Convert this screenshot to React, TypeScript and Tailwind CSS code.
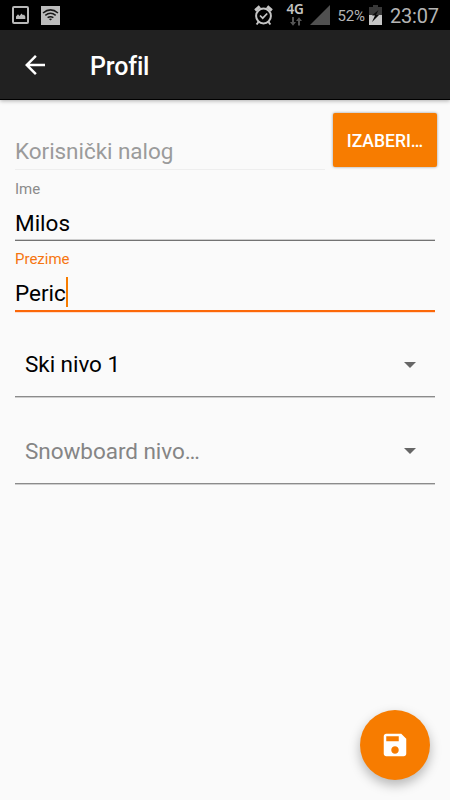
import React from "react";

function StatusBar() {
  return (
    <div className="flex h-[30px] bg-black text-[#b4b4b4]">
      <svg className="ml-3 mt-1.5 shrink-0" width="17" height="18" viewBox="0 0 17 18">
        <rect x="1" y="1" width="15" height="16" rx="1" fill="none" stroke="#b8b8b8" strokeWidth="2" />
        <path d="M4 13V10.500L6 8.300L7.500 10L9.500 7.500L11 9.300L12 8.500L13.300 10.500V13Z" fill="#b8b8b8" />
      </svg>
      <svg className="ml-3 mt-[5px] shrink-0" width="19" height="20" viewBox="0 0 19 20">
        <rect x="0" y="1" width="19" height="19" fill="#bcbcbc" />
        <g fill="none" stroke="#181818" strokeWidth="1.500">
          <path d="M2 8Q9.500 1.800 17 8" />
          <path d="M4.300 10.400Q9.500 6.200 14.700 10.400" />
          <path d="M6.600 12.700Q9.500 10.600 12.400 12.700" />
        </g>
        <path d="M7.900 14Q9.500 13 11.100 14L9.500 15.600Z" fill="#181818" />
      </svg>
      <svg className="ml-[194px] mt-1 shrink-0" width="19" height="22" viewBox="0 0 19 22" fill="none" stroke="#c4c4c4">
        <circle cx="9.500" cy="12" r="7.400" strokeWidth="2" />
        <path d="M1.200 6.500L5.800 2.500M17.800 6.500L13.200 2.500" strokeWidth="3" />
        <path d="M6 11.500L8.700 14.200L13.200 9.500" strokeWidth="1.700" />
        <path d="M4.500 18L2.600 20.500M14.500 18L16.400 20.500" strokeWidth="2" />
      </svg>
      <div className="ml-[13.500px] w-[18.500px] shrink-0 pt-[3px]">
        <div className="font-['Noto_Sans',sans-serif] text-[13.500px] font-semibold leading-[13px] tracking-[-0.200px] text-[#c4c4c4]">4G</div>
        <svg className="ml-[3px] mt-px block" width="12" height="9" viewBox="0 0 12 9" fill="#555">
          <path d="M2 0H4V5H6L3 8.700L0 5H2ZM8 8.500H10V4H12L9 0.300L6 4H8Z" />
        </svg>
      </div>
      <svg className="ml-[5px] mt-[5px] shrink-0" width="20" height="20" viewBox="0 0 20 20">
        <path d="M20 0V20H0Z" fill="#505050" />
      </svg>
      <div className="ml-[7.500px] w-[28px] shrink-0 whitespace-nowrap text-[15px] leading-[32px] tracking-[-0.200px]">52%</div>
      <svg className="ml-[3.500px] mt-[5px] shrink-0" width="13" height="20" viewBox="0 0 13 20">
        <path d="M4 0H9V2H13V20H0V2H4Z" fill="#383838" />
        <path d="M0 10H13V20H0Z" fill="#c6c6c6" />
        <path d="M9.500 5L3 10.500H6L3 17L10 10H7Z" fill="#080808" />
      </svg>
      <div className="ml-[8px] whitespace-nowrap text-[20px] leading-[32px] tracking-[-0.200px]">23:07</div>
    </div>
  );
}

function AppBar() {
  return (
    <header className="flex h-[70px] items-center border-b border-black bg-[#212121] pl-5 text-white shadow-[0_1px_4px_rgba(0,0,0,0.300)]">
      <svg width="30" height="30" viewBox="0 0 24 24" fill="currentColor">
        <path d="M20 11H7.830l5.590-5.590L12 4l-8 8 8 8 1.410-1.410L7.830 13H20v-2z" />
      </svg>
      <h1 className="ml-10 pt-[4px] text-[25px] font-medium leading-[30px] tracking-[-0.150px]">Profil</h1>
    </header>
  );
}

function Select({ text, className, arrowClassName }: { text: string; className: string; arrowClassName: string }) {
  return (
    <div className={`flex justify-between border-b border-[#8b8b8b] pl-2.5 pr-[19px] shadow-[0_1px_0_#cecece] ${className}`}>
      <span className="text-[22.500px] leading-[30px] tracking-[-0.050px]">{text}</span>
      <svg className={arrowClassName} width="12" height="6" viewBox="0 0 12 6">
        <path d="M0 0H12L6 6Z" fill="#666" />
      </svg>
    </div>
  );
}

export default function App() {
  return (
    <div className="flex h-[800px] w-[450px] flex-col overflow-hidden bg-[#fafafa] font-[Roboto,sans-serif]">
      <StatusBar />
      <AppBar />
      <main className="flex flex-1 flex-col px-[15px]">
        <div className="-mr-[2px] flex h-[71px] justify-between">
          <div className="h-[70px] w-[310px] border-b border-[#eeeeee] pt-[36px] text-[22.500px] leading-[30px] tracking-[-0.050px] text-[#9b9b9b]">Korisnički nalog</div>
          <button className="mt-[13px] h-[54px] w-[104px] rounded-[2px] bg-[#f77c00] pt-[2px] text-[17.500px] font-medium text-white shadow-[0_0_3px_rgba(0,0,0,0.400)]">IZABERI…</button>
        </div>
        <div className="flex h-[70px] flex-col border-b border-[#737373] pt-[8px] shadow-[inset_0_-1px_0_#cecece]">
          <label className="text-[15px] leading-5 text-[#8b8b8b]">Ime</label>
          <span className="mt-[9px] text-[22.500px] leading-[30px] text-black">Milos</span>
        </div>
        <div className="flex h-[71px] flex-col border-b-2 border-[#fc6808] pt-[8px] shadow-[0_1px_0_#fddccb]">
          <label className="text-[15px] leading-5 text-[#f6750f]">Prezime</label>
          <div className="mt-[9px] flex text-[22.500px] leading-[30px] text-black">
            <span>Peric</span>
            <i className="-mt-px h-[30px] w-[2px] bg-[#f77c00]" />
          </div>
        </div>
        <Select text="Ski nivo 1" className="h-[85px] pt-[37px] text-black" arrowClassName="mt-[13px]" />
        <Select text="Snowboard nivo…" className="h-[87px] pt-[39px] text-[#858585]" arrowClassName="mt-[12px]" />
        <button className="mb-5 ml-auto mr-[5px] mt-auto flex size-[70px] items-center justify-center rounded-full bg-[#f77c00] text-white shadow-[0_5px_12px_rgba(0,0,0,0.280)]">
          <svg width="30" height="30" viewBox="0 0 24 24" fill="currentColor">
            <path d="M17 3H5c-1.110 0-2 .9-2 2v14c0 1.100.89 2 2 2h14c1.100 0 2-.9 2-2V7l-4-4zm-5 16c-1.660 0-3-1.340-3-3s1.340-3 3-3 3 1.340 3 3-1.340 3-3 3zm3-10H5V5h10v4z" />
          </svg>
        </button>
      </main>
    </div>
  );
}
